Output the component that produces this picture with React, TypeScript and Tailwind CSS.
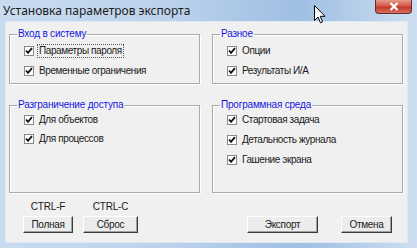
import React from "react";

const font = { fontFamily: '"Liberation Sans", Arial, sans-serif' };

function Check({ label, focus }: { label: string; focus?: boolean }) {
  return (
    <div className="flex items-center h-[12px]">
      <div className="w-[10px] h-[10px] bg-white border border-[#8a8a8a] flex items-center justify-center">
        <svg width="8" height="8" viewBox="0 0 8 8">
          <path d="M1 3.5 L3 5.8 L7 1.2" stroke="#111" strokeWidth="1.8" fill="none" />
        </svg>
      </div>
      <span
        className={
          "ml-[4px] px-[1px] text-[10px] leading-[12px] tracking-[-0.4px] text-[#1a1a1a] " +
          (focus ? "outline outline-1 outline-dotted outline-[#555]" : "")
        }
      >
        {label}
      </span>
    </div>
  );
}

function Group({
  title,
  items,
  h,
  top,
  gap,
  focusFirst,
}: {
  title: string;
  items: string[];
  h: string;
  top: string;
  gap: string;
  focusFirst?: boolean;
}) {
  return (
    <fieldset className={"border border-[#a9a9a9] shadow-[inset_1px_1px_0_#fff,1px_1px_0_#fff] " + h}>
      <legend className="ml-[7px] px-[1px] text-[10px] leading-[12px] tracking-[-0.2px] text-[#1515e0]">{title}</legend>
      <div className={"flex flex-col " + top + " " + gap}>
        {items.map((it, i) => (
          <div key={it} className="pl-[14px]">
            <Check label={it} focus={focusFirst && i === 0} />
          </div>
        ))}
      </div>
    </fieldset>
  );
}

function Btn({ label, w }: { label: string; w: string }) {
  return (
    <div
      className={
        "h-[17px] flex items-center justify-center text-[10px] tracking-[-0.3px] text-[#1a1a1a] bg-[#ececec] border-t border-l border-t-[#fdfdfd] border-l-[#fdfdfd] border-r border-b border-r-[#3a3a3a] border-b-[#3a3a3a] shadow-[inset_-1px_-1px_0_#a0a0a0] " +
        w
      }
    >
      {label}
    </div>
  );
}

export default function App() {
  return (
    <div
      className="w-[417px] h-[248px] relative overflow-hidden flex flex-col bg-[linear-gradient(90deg,#c9dbef_0%,#bcd2ec_40%,#9fbfe3_72%,#b9d0ea_88%,#cfdff1_100%)]"
      style={font}
    >
      <div className="h-[21px] flex items-center pl-[3px]">
        <span className="text-[12px] text-[#1b1b1b]" style={{ fontFamily: '"Noto Sans", "Liberation Sans", sans-serif' }}>
          Установка параметров экспорта
        </span>
      </div>
      <div className="ml-[5px] mr-[9px] h-[222px] bg-[#f0f0f0] border border-[#dfe9f5] flex flex-col pl-[3px] pr-[5px] pt-[6px]">
        <div className="grid grid-cols-[191px_191px] gap-x-[12px]">
          <Group title="Вход в систему" items={["Параметры пароля", "Временные ограничения"]} h="h-[56px]" top="pt-[5px]" gap="gap-[8px]" focusFirst />
          <Group title="Разное" items={["Опции", "Результаты И/А"]} h="h-[56px]" top="pt-[5px]" gap="gap-[8px]" />
        </div>
        <div className="grid grid-cols-[191px_191px] gap-x-[12px] mt-[15px]">
          <Group title="Разграничение доступа" items={["Для объектов", "Для процессов"]} h="h-[94px]" top="pt-[3px]" gap="gap-[7px]" />
          <Group title="Программная среда" items={["Стартовая задача", "Детальность журнала", "Гашение экрана"]} h="h-[94px]" top="pt-[3px]" gap="gap-[8px]" />
        </div>
        <div className="flex items-end mt-[8px]">
          <div className="flex flex-col items-center w-[50px] ml-[14px]">
            <span className="text-[10px] leading-[12px] tracking-[-0.2px] text-[#1a1a1a]">CTRL-F</span>
            <div className="mt-[3px] w-full"><Btn label="Полная" w="w-[50px]" /></div>
          </div>
          <div className="flex flex-col items-center w-[55px] ml-[10px]">
            <span className="text-[10px] leading-[12px] tracking-[-0.2px] text-[#1a1a1a]">CTRL-C</span>
            <div className="mt-[3px] w-full"><Btn label="Сброс" w="w-[55px]" /></div>
          </div>
          <div className="ml-auto flex gap-[23px] mr-[10px]">
            <Btn label="Экспорт" w="w-[71px]" />
            <Btn label="Отмена" w="w-[51px]" />
          </div>
        </div>
      </div>
      <div className="absolute right-[5px] top-0 w-[37px] h-[14px] rounded-b-[4px] border border-t-0 border-[#6b2a2a] bg-[linear-gradient(180deg,#e89a88_0%,#d2584a_45%,#c2392b_55%,#d8705f_100%)] flex items-center justify-center">
        <svg width="10" height="9" viewBox="0 0 10 9">
          <path d="M1.5 1 L8.5 8 M8.5 1 L1.5 8" stroke="#fff" strokeWidth="2.2" />
        </svg>
      </div>
      <svg className="absolute left-[314px] top-[5px]" width="12" height="19" viewBox="0 0 12 19">
        <path d="M0.5 0.5 L0.5 15.5 L4 12 L6.5 17.8 L8.6 16.9 L6.2 11.3 L11 11.3 Z" fill="#fff" stroke="#000" strokeWidth="1" />
      </svg>
    </div>
  );
}
